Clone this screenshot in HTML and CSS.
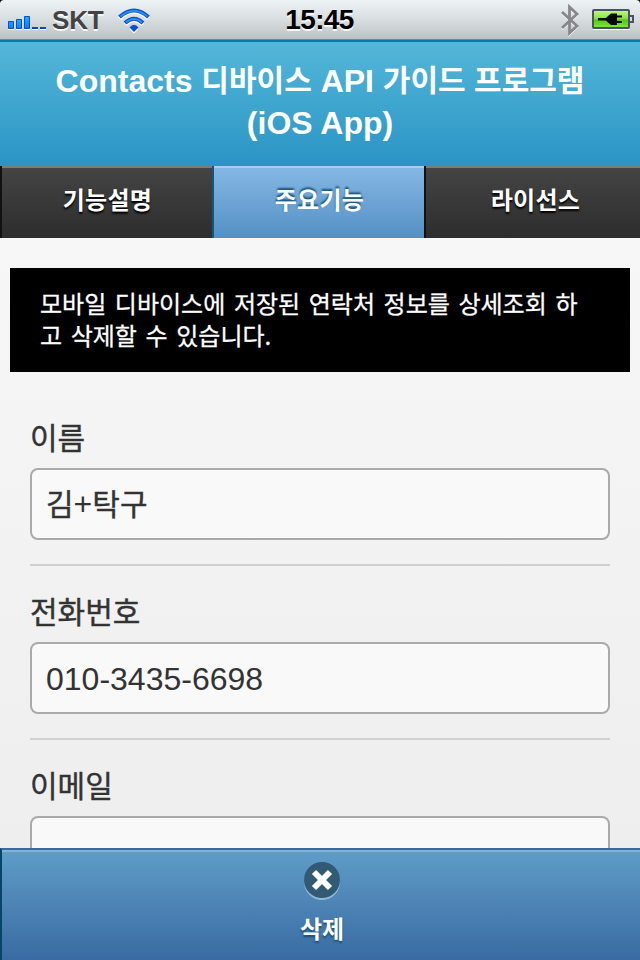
FILE: index.html
```html
<!DOCTYPE html>
<html lang="ko">
<head>
<meta charset="utf-8">
<title>Contacts</title>
<link rel="stylesheet" href="styles.css">
</head>
<body>
<div class="statusbar">
  <div class="carrier">
    <svg class="signal" width="42" height="18" viewBox="0 0 42 18">
      <defs><linearGradient id="bar" x1="0" y1="0" x2="0" y2="1"><stop offset="0" stop-color="#24aaff"/><stop offset="1" stop-color="#087cf4"/></linearGradient></defs>
      <path d="M0 16.500h6M8 16.500h6M16 16.500h6M24 16.500h6M32 16.500h6" stroke="#fff"/>
      <g fill="url(#bar)" stroke="#0651c9"><path d="M.5 8.500h5v7h-5zM8.500 6.500h5v9h-5z"/><path d="M16.500 3.500h5v12h-5z"/></g>
      <path d="M24 15h6M32 15h6" stroke="#0645bf" stroke-width="2"/>
    </svg>
    <span class="network">SKT</span>
    <svg class="wifi" width="34" height="26" viewBox="0 0 34 26">
      <g fill="none" stroke="#fff" stroke-width="4" transform="translate(0 1.500)"><path d="M2.500 9Q17-4 31.500 9M8 15Q17 6.500 26 15"/><path d="M12.500 19.500Q17 14 21.500 19.500L17 24Z" fill="#fff" stroke="none"/></g>
      <g fill="none" stroke="#0752ce" stroke-width="4"><path d="M2.500 9Q17-4 31.500 9M8 15Q17 6.500 26 15"/><path d="M12.500 19.500Q17 14 21.500 19.500L17 24Z" fill="#0752ce" stroke="none"/></g>
      <path d="M3.500 8.500Q17-3 30.500 8.500M9 14.500Q17 7.500 25 14.500" fill="none" stroke="#2b8bef" stroke-width="1.800"/>
    </svg>
  </div>
  <div class="clock">15:45</div>
  <div class="power">
    <svg width="20" height="34" viewBox="0 0 20 34">
      <path d="M2 9L17 23L9.500 30V4L17 11L2 25" transform="translate(0 1)" fill="none" stroke="#fff" stroke-width="2.500"/>
      <path d="M2 9L17 23L9.500 30V4L17 11L2 25" fill="none" stroke="#858789" stroke-width="2.800"/>
    </svg>
    <svg width="44" height="22" viewBox="0 0 44 22">
      <defs><linearGradient id="cell" x1="0" y1="0" x2="0" y2="1"><stop offset="0" stop-color="#c5f989"/><stop offset=".48" stop-color="#87e144"/><stop offset=".55" stop-color="#55c516"/><stop offset="1" stop-color="#80ed31"/></linearGradient></defs>
      <path d="M1 20.500h37" stroke="#fff"/>
      <rect x="1" y="1" width="36" height="18" rx="1" fill="url(#cell)" stroke="#4c5068" stroke-width="2"/>
      <path d="M38 7h3v6h-3" fill="#d9dcdf" stroke="#4c5068" stroke-width="2"/>
      <path d="M6 9h8l2-2 3-2.500h6v2h5v2h-5v3.500h5v2h-5v2h-6l-3-2.500-2-2H6z" fill="#050805"/>
    </svg>
  </div>
</div>
<header class="header">
  <h1>Contacts <span class="ko">디바이스</span> API <span class="ko">가이드 프로그램</span><br>(iOS App)</h1>
</header>
<nav class="tabs">
  <a class="tab">기능설명</a>
  <a class="tab active">주요기능</a>
  <a class="tab last">라이선스</a>
</nav>
<main class="content">
  <p class="notice">모바일 디바이스에 저장된 연락처 정보를 상세조회 하<br>고 삭제할 수 있습니다.</p>
  <section class="field">
    <div class="label">이름</div>
    <div class="input ko">김<span class="latin">+</span>탁구</div>
  </section>
  <section class="field">
    <div class="label">전화번호</div>
    <div class="input"><span class="latin">010-3435-6698</span></div>
  </section>
  <section class="field">
    <div class="label">이메일</div>
    <div class="input"></div>
  </section>
</main>
<footer class="footer">
  <svg width="38" height="40" viewBox="0 0 38 40">
    <circle cx="19" cy="20" r="18" fill="#92bad6"/>
    <circle cx="19" cy="18" r="18" fill="#335a74"/>
    <path d="M11 10L27 26M27 10L11 26" stroke="#fff" stroke-width="6"/>
  </svg>
  <span class="action">삭제</span>
</footer>
</body>
</html>
```
FILE: styles.css
```css
* { box-sizing: border-box; }
body {
  margin: 0;
  width: 640px;
  height: 960px;
  overflow: hidden;
  display: flex;
  flex-direction: column;
  font-family: "Liberation Sans", "Noto Sans CJK KR", sans-serif;
  color: #333;
  background: #000;
}
svg { display: block; flex: none; }
.statusbar {
  height: 40px;
  flex: none;
  display: grid;
  grid-template-columns: 1fr 80px 1fr;
  align-items: center;
  background: linear-gradient(#eef4f6, #d8dde0 50%, #bcc1c4);
  border-bottom: 1px solid #838381;
  border-radius: 4px 4px 0 0;
}
.carrier { display: flex; align-items: center; height: 39px; padding-left: 8px; }
.signal { margin-top: 4px; }
.network {
  width: 53px;
  margin-left: 2px;
  padding-top: 2px;
  font-size: 26px;
  line-height: 37px;
  font-weight: bold;
  color: #434343;
  text-shadow: 0 2px 0 #f5f7f8;
  letter-spacing: -.2px;
}
.wifi { margin-left: 12px; margin-top: 2px; }
.clock {
  text-align: center;
  font-size: 28px;
  line-height: 39px;
  font-weight: bold;
  color: #000;
  letter-spacing: -.6px;
  margin-left: -1px;
  text-shadow: 0 2px 0 #f5f7f8;
}
.power { display: flex; justify-content: flex-end; align-items: center; gap: 12px; padding-right: 4px; }
.header {
  height: 126px;
  flex: none;
  border-top: 2px solid #0879aa;
  background: linear-gradient(#54b7d8, #2a94c5);
  padding-top: 18px;
}
h1 {
  margin: 0;
  color: #fff;
  font-size: 32px;
  line-height: 42px;
  text-align: center;
  font-weight: bold;
}
h1 .ko, .input.ko { font-family: "Noto Sans CJK KR", sans-serif; font-size: 30px; }
h1 .ko { line-height: 1; position: relative; top: -1px; }
.tabs { height: 72px; flex: none; display: grid; grid-template-columns: 212px 212px 1fr; }
.tab {
  border-left: 2px solid #111;
  background: linear-gradient(#7b7b7b 2px, #444 2px, #2d2d2d);
  color: #fff;
  font: bold 24px/66px "Noto Sans CJK KR", sans-serif;
  letter-spacing: .3px;
  padding-left: 1px;
  text-align: center;
  text-shadow: 0 2px 2px #000;
}
.tab.active {
  border-color: #155678;
  background: linear-gradient(#a6cef0 2px, #85b7e3 2px, #5490c5);
  text-shadow: 0 -2px 2px #145072;
}
.tab.last { padding-left: 5px; }
.content {
  flex: 1;
  min-height: 0;
  overflow: hidden;
  padding-top: 30px;
  background: linear-gradient(#f7f7f7, #eee);
}
.notice {
  margin: 0 10px;
  height: 104px;
  padding: 19px 30px;
  background: #000;
  color: #fff;
  font: 24px/32px "Noto Sans CJK KR", sans-serif;
  word-spacing: 1.9px;
  white-space: nowrap;
  -webkit-text-stroke: .3px;
}
.field { margin: 0 30px; height: 174px; padding-top: 22px; border-bottom: 2px solid #d0d0d0; }
.notice + .field { height: 194px; padding-top: 42px; }
.label { height: 54px; font: 30px/44px "Noto Sans CJK KR", sans-serif; -webkit-text-stroke: .4px; }
.input {
  height: 72px;
  border: 2px solid #aaa;
  border-radius: 8px;
  background: #f9f9f9;
  padding-left: 14px;
  line-height: 70px;
}
.input.ko { line-height: 64px; -webkit-text-stroke: .4px; }
.latin { font-family: "Liberation Sans", sans-serif; font-size: 32px; -webkit-text-stroke: 0; }
.footer {
  height: 112px;
  flex: none;
  display: flex;
  flex-direction: column;
  align-items: center;
  padding: 12px 0 0 2px;
  border-top: 2px solid #396ba0;
  border-left: 2px solid #064468;
  background: linear-gradient(#85b3d2 2px, #5f9cc7 2px, #396ba2);
}
.action {
  font: bold 24px/36px "Noto Sans CJK KR", sans-serif;
  color: #fff;
  margin-top: 8px;
  text-shadow: 0 2px 2px #194b73;
}
```
